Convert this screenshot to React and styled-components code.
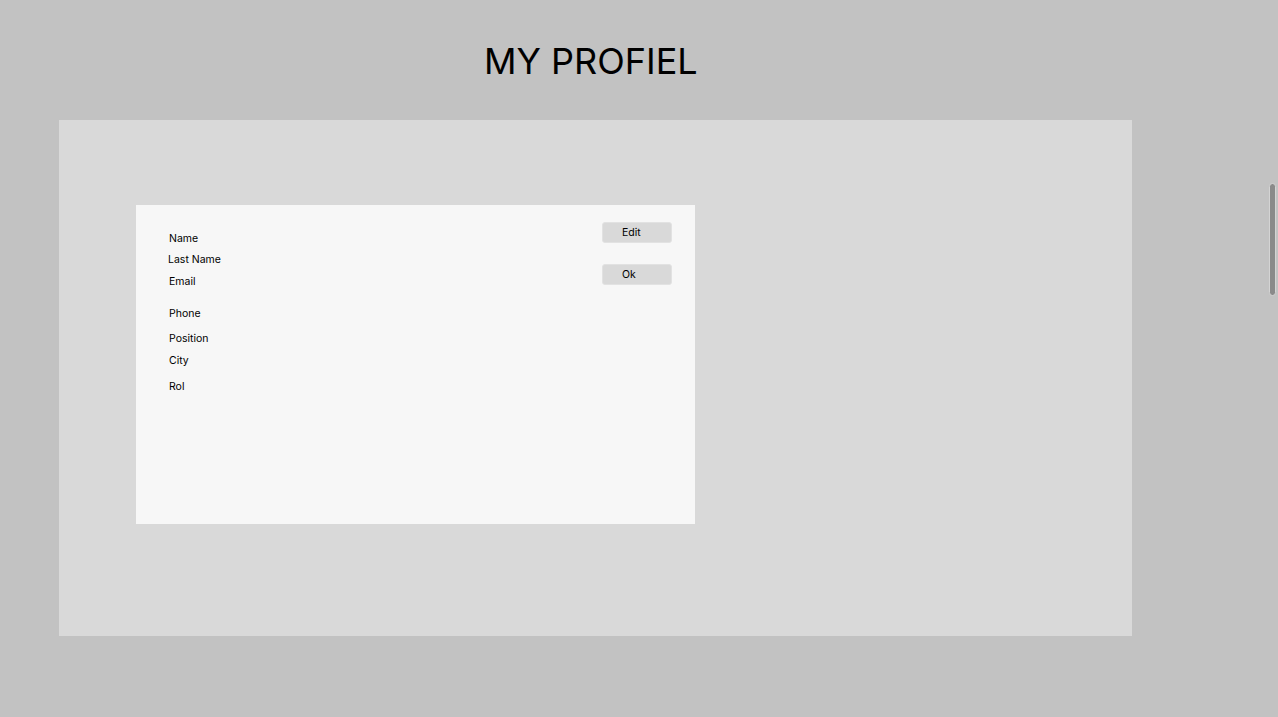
import React from 'react'
import styled, { createGlobalStyle } from 'styled-components'

const GlobalStyle = createGlobalStyle`
	html, body {
		margin: 0;
		padding: 0;
		overflow: hidden;
		background-color: #c2c2c2;
		font-family: Inter, "Noto Sans", sans-serif;
		color: #000;
	}
`

const Page = styled.div`
	min-height: 717px;
	padding: 39px 0 0 59px;
	box-sizing: border-box;
`

const Title = styled.h1`
	margin: 0 0 37px 425px;
	font-size: 36px;
	font-weight: 400;
	line-height: 44px;
`

const Panel = styled.section`
	width: 1073px;
	height: 516px;
	background-color: #d9d9d9;
	padding: 85px 0 0 77px;
	box-sizing: border-box;
`

const Card = styled.div`
	width: 559px;
	height: 319px;
	background-color: #f7f7f7;
	display: flex;
	justify-content: space-between;
	box-sizing: border-box;
`

const Fields = styled.div`
	display: flex;
	flex-direction: column;
	padding: 27px 0 0 33px;
`

const Label = styled.span`
	font-size: 10.5px;
	line-height: 14px;
	margin-top: ${props => props.space || 0}px;
	margin-left: ${props => props.shift || 0}px;
`

const Actions = styled.div`
	display: flex;
	flex-direction: column;
	gap: 21px;
	padding: 17px 23px 0 0;
`

const Button = styled.button`
	width: 70px;
	height: 21px;
	padding: 0 0 0 19px;
	text-align: left;
	font-family: inherit;
	font-size: 10.5px;
	color: #000;
	background-color: #d9d9d9;
	border: 1px solid #e2e2e2;
	border-radius: 3px;
	cursor: pointer;
`

const ScrollThumb = styled.div`
	position: fixed;
	top: 183px;
	right: 2px;
	width: 7px;
	height: 113px;
	border-radius: 4px;
	background-color: #8a8a8a;
	border: 1px solid #d4d4d4;
	box-sizing: border-box;
`

const FIELDS = [
	{ label: 'Name', space: 0 },
	{ label: 'Last Name', space: 7, shift: -1 },
	{ label: 'Email', space: 8 },
	{ label: 'Phone', space: 18 },
	{ label: 'Position', space: 11 },
	{ label: 'City', space: 8 },
	{ label: 'Rol', space: 12 },
]

const App = () => {
	return (
		<>
			<GlobalStyle />
			<Page>
				<Title>MY PROFIEL</Title>
				<Panel>
					<Card>
						<Fields>
							{FIELDS.map(f => (
								<Label key={f.label} space={f.space} shift={f.shift}>{f.label}</Label>
							))}
						</Fields>
						<Actions>
							<Button>Edit</Button>
							<Button>Ok</Button>
						</Actions>
					</Card>
				</Panel>
			</Page>
			<ScrollThumb />
		</>
	)
}

export default App
